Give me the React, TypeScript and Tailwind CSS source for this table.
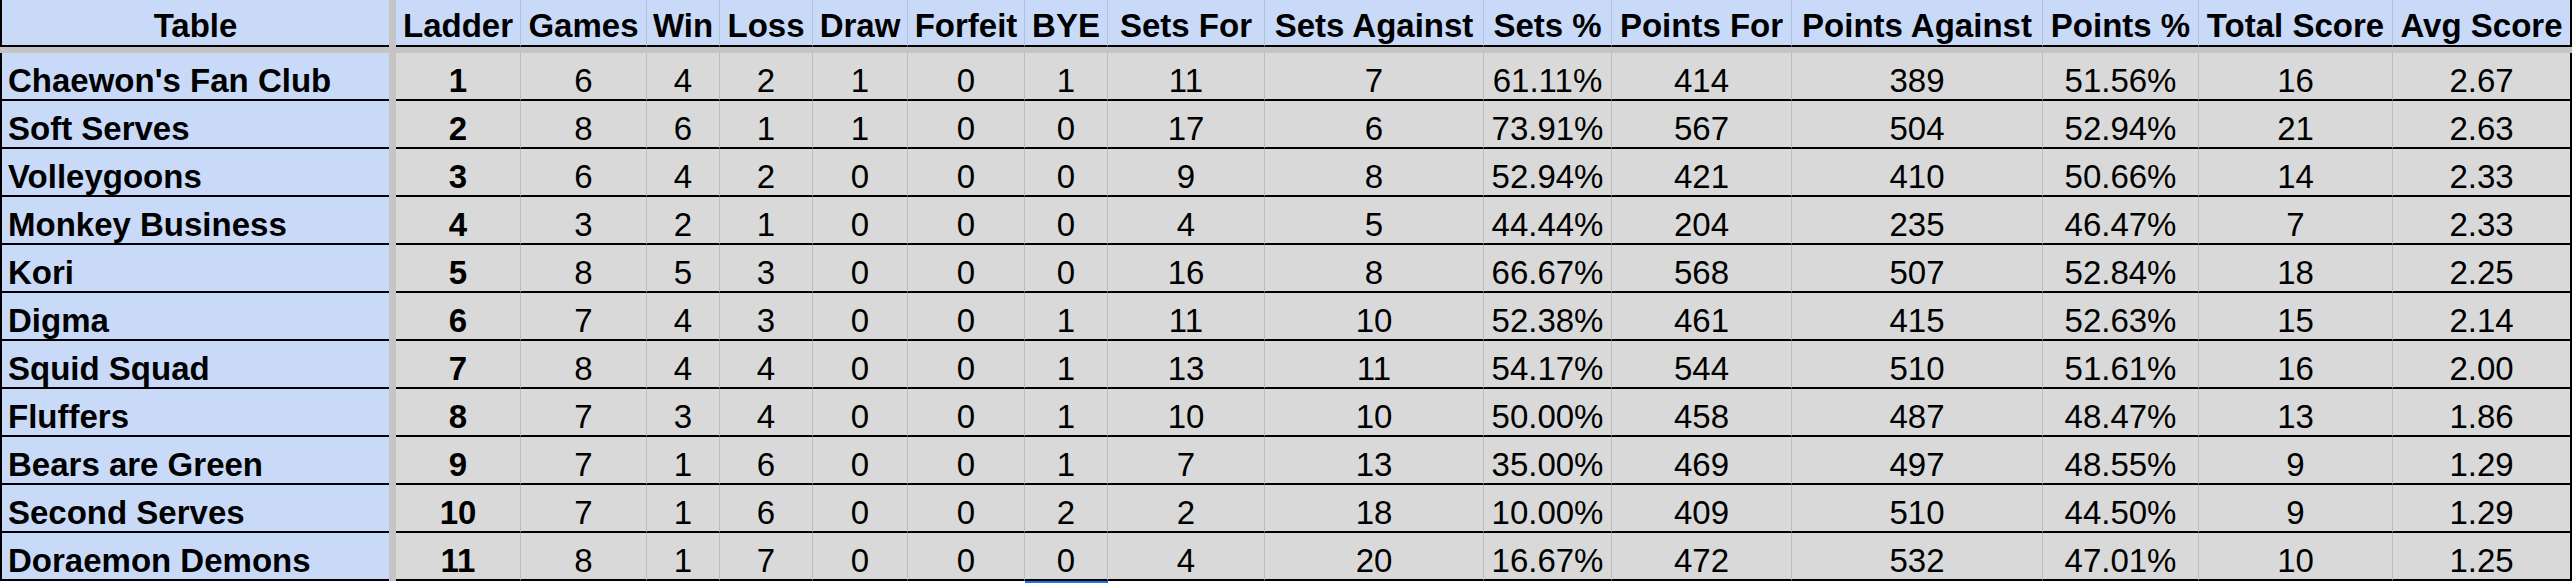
import React from "react";

type Team = {
  name: string;
  ladder: number;
  stats: string[];
};

const columns = [
  { label: "Ladder", w: "w-[125px]" },
  { label: "Games", w: "w-[126px]" },
  { label: "Win", w: "w-[73px]" },
  { label: "Loss", w: "w-[93px]" },
  { label: "Draw", w: "w-[95px]" },
  { label: "Forfeit", w: "w-[117px]" },
  { label: "BYE", w: "w-[83px]" },
  { label: "Sets For", w: "w-[157px]" },
  { label: "Sets Against", w: "w-[219px]" },
  { label: "Sets %", w: "w-[128px]" },
  { label: "Points For", w: "w-[180px]" },
  { label: "Points Against", w: "w-[251px]" },
  { label: "Points %", w: "w-[156px]" },
  { label: "Total Score", w: "w-[194px]" },
  { label: "Avg Score", w: "w-[179px]" },
];

const teams: Team[] = [
  { name: "Chaewon's Fan Club", ladder: 1, stats: ["6", "4", "2", "1", "0", "1", "11", "7", "61.11%", "414", "389", "51.56%", "16", "2.67"] },
  { name: "Soft Serves", ladder: 2, stats: ["8", "6", "1", "1", "0", "0", "17", "6", "73.91%", "567", "504", "52.94%", "21", "2.63"] },
  { name: "Volleygoons", ladder: 3, stats: ["6", "4", "2", "0", "0", "0", "9", "8", "52.94%", "421", "410", "50.66%", "14", "2.33"] },
  { name: "Monkey Business", ladder: 4, stats: ["3", "2", "1", "0", "0", "0", "4", "5", "44.44%", "204", "235", "46.47%", "7", "2.33"] },
  { name: "Kori", ladder: 5, stats: ["8", "5", "3", "0", "0", "0", "16", "8", "66.67%", "568", "507", "52.84%", "18", "2.25"] },
  { name: "Digma", ladder: 6, stats: ["7", "4", "3", "0", "0", "1", "11", "10", "52.38%", "461", "415", "52.63%", "15", "2.14"] },
  { name: "Squid Squad", ladder: 7, stats: ["8", "4", "4", "0", "0", "1", "13", "11", "54.17%", "544", "510", "51.61%", "16", "2.00"] },
  { name: "Fluffers", ladder: 8, stats: ["7", "3", "4", "0", "0", "1", "10", "10", "50.00%", "458", "487", "48.47%", "13", "1.86"] },
  { name: "Bears are Green", ladder: 9, stats: ["7", "1", "6", "0", "0", "1", "7", "13", "35.00%", "469", "497", "48.55%", "9", "1.29"] },
  { name: "Second Serves", ladder: 10, stats: ["7", "1", "6", "0", "0", "2", "2", "18", "10.00%", "409", "510", "44.50%", "9", "1.29"] },
  { name: "Doraemon Demons", ladder: 11, stats: ["8", "1", "7", "0", "0", "0", "4", "20", "16.67%", "472", "532", "47.01%", "10", "1.25"] },
];

function HeaderRow() {
  return (
    <div className="flex h-[47px]">
      <div className="flex w-[389px] items-end justify-center border-b-2 border-l-2 border-black bg-[#c9daf8] pb-[3px] font-bold">
        Table
      </div>
      <div className="w-[7px] bg-[#c4c4c4]" />
      {columns.map((col, i) => (
        <div
          key={col.label}
          className={`flex ${col.w} items-end justify-center whitespace-nowrap border-b-2 border-black bg-[#c9daf8] pb-[3px] font-bold ${
            i === columns.length - 1 ? "border-r-2 border-r-black" : "border-r border-r-[#b3c2dc]"
          }`}
        >
          {col.label}
        </div>
      ))}
    </div>
  );
}

function TeamRow({ team }: { team: Team }) {
  const values = [String(team.ladder), ...team.stats];
  return (
    <div className="flex h-[48px]">
      <div className="flex w-[389px] items-end border-b-2 border-l-2 border-black bg-[#c9daf8] pb-[2px] pl-[6px] font-bold">
        {team.name}
      </div>
      <div className="w-[7px] bg-[#c4c4c4]" />
      {values.map((v, i) => (
        <div
          key={i}
          className={`flex ${columns[i].w} items-end justify-center border-b-2 border-b-black bg-[#d9d9d9] pb-[2px] ${
            i === 0 ? "font-bold" : ""
          } ${i === values.length - 1 ? "border-r-2 border-r-black" : "border-r border-r-[#bcbcbc]"}`}
        >
          {v}
        </div>
      ))}
    </div>
  );
}

export default function App() {
  return (
    <div className="h-[583px] w-[2575px] overflow-hidden bg-white font-['Liberation_Sans',Arial,sans-serif] text-[33px] leading-none text-black">
      <HeaderRow />
      <div className="flex h-[6px]">
        <div className="w-[2572px] bg-[#c4c4c4]" />
      </div>
      {teams.map((t) => (
        <TeamRow key={t.name} team={t} />
      ))}
      <div className="flex h-[2px]">
        <div className="w-[1025px]" />
        <div className="w-[83px] bg-[#1a73e8]" />
      </div>
    </div>
  );
}
